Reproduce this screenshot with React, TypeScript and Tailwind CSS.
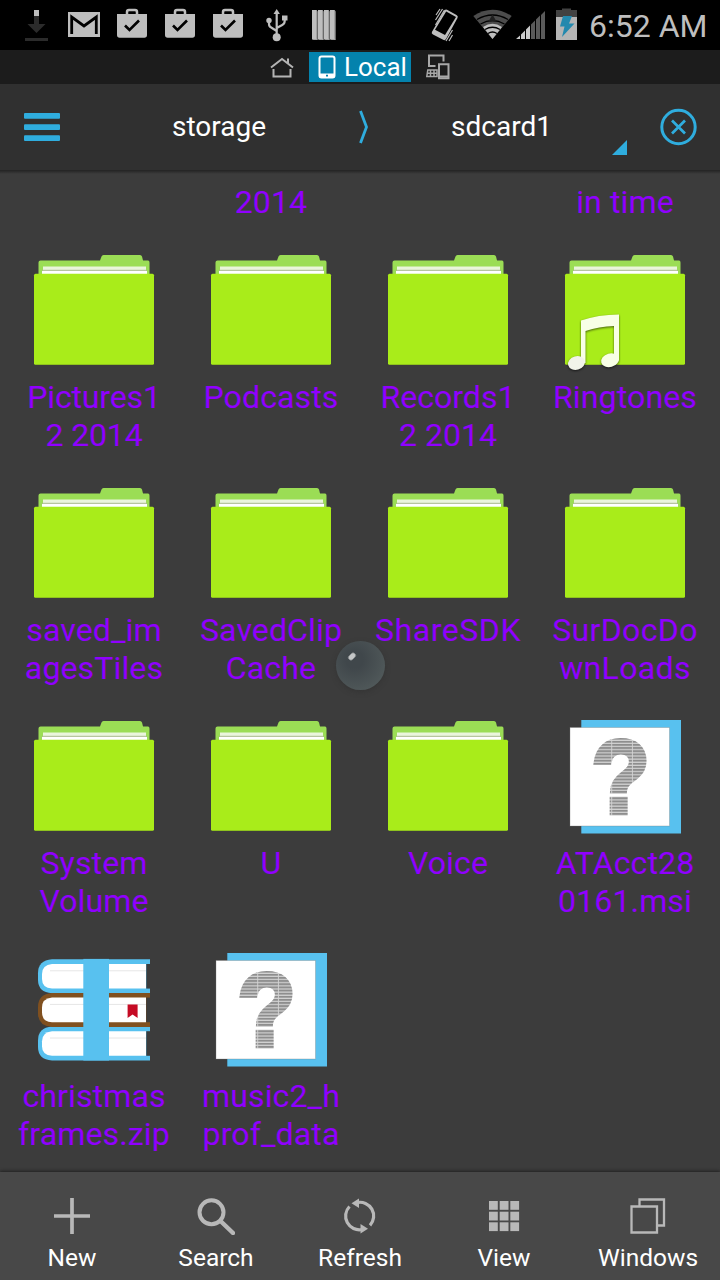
import type { ReactNode } from "react";

type Kind = "folder" | "music" | "unknown" | "zip";
type Item = { kind: Kind; lines: string[]; spacing?: string };

const items: Item[] = [
  { kind: "folder", lines: ["Pictures1", "2 2014"], spacing: "tracking-[-0.15px]" },
  { kind: "folder", lines: ["Podcasts"] },
  { kind: "folder", lines: ["Records1", "2 2014"], spacing: "tracking-[0px]" },
  { kind: "music", lines: ["Ringtones"] },
  { kind: "folder", lines: ["saved_im", "agesTiles"] },
  { kind: "folder", lines: ["SavedClip", "Cache"] },
  { kind: "folder", lines: ["ShareSDK"], spacing: "tracking-[0.55px]" },
  { kind: "folder", lines: ["SurDocDo", "wnLoads"], spacing: "tracking-[0.35px]" },
  { kind: "folder", lines: ["System", "Volume"] },
  { kind: "folder", lines: ["U"] },
  { kind: "folder", lines: ["Voice"] },
  { kind: "unknown", lines: ["ATAcct28", "0161.msi"] },
  { kind: "zip", lines: ["christmas", "frames.zip"] },
  { kind: "unknown", lines: ["music2_h", "prof_data"] },
];

function Folder({ music }: { music?: boolean }) {
  return (
    <>
      <path d="M9.500 28V16.500q0-2 2-2H71l1.500-4q.5-1.500 2-1.500H111q1.500 0 2 1.500l1 4h5q1.500 0 1.500 2V28z" fill="#9bdd55" />
      <path d="M14 20.500H117V28H14z" fill="#eaf5dc" />
      <path d="M13 25H118V28H13z" fill="#fff" />
      <path d="M13 24.300H118" stroke="#a9b98f" strokeWidth="1" />
      <rect x="5" y="27.700" width="120" height="91" rx="1.500" fill="#a9ec1a" />
      <path d="M6 118.500H124" stroke="#8fc41c" strokeWidth=".7" />
      {music && (
        <g style={{ filter: "drop-shadow(0 1px 1px rgba(0,0,0,.6))" }} fill="#f8ffe6">
          <path d="M21 74.500q17-6 38-6v46h-5V80q-15 .5-28.500 5V117H21z" />
          <ellipse cx="16.500" cy="117" rx="8.600" ry="6.800" transform="rotate(-15 16.500 117)" fill="#f1f3e9" />
          <ellipse cx="50" cy="114.300" rx="9" ry="6.800" transform="rotate(-15 50 114.300)" />
        </g>
      )}
    </>
  );
}

function Unknown() {
  return (
    <>
      <defs>
        <pattern id="scan" width="23" height="3.200" patternUnits="userSpaceOnUse">
          <rect width="23" height="3.200" fill="#d4d4d4" />
          <rect width="22" height="2" fill="#8e8e8e" />
        </pattern>
      </defs>
      <g transform="translate(5 0)">
        <rect x="16.300" y="8" width="99.700" height="113.500" fill="#58c1ef" />
        <rect x="5" y="15.500" width="99.500" height="98.500" fill="#fff" stroke="#77777766" strokeWidth=".8" />
        <text
          x="0"
          y="0"
          transform="translate(26.500 101) scale(.9 .98)"
          fontFamily="Liberation Sans, sans-serif"
          fontWeight="700"
          fontSize="106"
          fill="url(#scan)"
          stroke="url(#scan)"
          strokeWidth="5"
        >
          ?
        </text>
      </g>
    </>
  );
}

function Book({ y, color, mark }: { y: number; color: string; mark?: boolean }) {
  return (
    <g transform={`translate(0 ${y})`}>
      <path d="M121 0H23Q9 1 9 14v6.500Q9 33 23 34H121z" fill={color} />
      <path d="M117 4.700H23q-10 1-10 10v5q0 9 10 9.600h94z" fill="#fff" />
      <path d="M117.300 4.700H122V29.300h-4.700z" fill="#3c3c3c" />
      <path d="M21 11.500H117" stroke="#e6e6e6" strokeWidth="1" />
      {mark && <path d="M98.600 11.500h10v13.500l-5-3.500-5 3.500z" fill="#c50b24" />}
    </g>
  );
}

function Zip() {
  return (
    <>
      <Book y={14.300} color="#58c1ef" />
      <Book y={81.500} color="#58c1ef" />
      <Book y={47.900} color="#80501f" mark />
      <rect x="54.300" y="13.900" width="25.700" height="101.600" fill="#58c1ef" />
    </>
  );
}

function Line({ spacing = "tracking-[0.14px]", children }: { spacing?: string; children: ReactNode }) {
  return <span className={`block h-[38px] whitespace-nowrap text-[32px] leading-[38px] text-[#9000ff] ${spacing}`}>{children}</span>;
}

function Cell({ item }: { item: Item }) {
  return (
    <div className="flex h-[233px] flex-col items-center">
      <svg className="h-[132px] w-[130px] shrink-0" viewBox="0 0 130 132">
        {item.kind === "folder" && <Folder />}
        {item.kind === "music" && <Folder music />}
        {item.kind === "unknown" && <Unknown />}
        {item.kind === "zip" && <Zip />}
      </svg>
      <div className="text-center">
        {item.lines.map((l) => (
          <Line key={l} spacing={item.spacing}>
            {l}
          </Line>
        ))}
      </div>
    </div>
  );
}

function Bag() {
  return (
    <svg className="h-[50px] w-12" viewBox="0 0 48 50">
      <path d="M19 15v-3q0-2 2-2h6q2 0 2 2v3" fill="none" stroke="#bebebe" strokeWidth="2.500" />
      <path d="M9 14H39V35q0 2.700-2.700 2.700H11.700Q9 37.700 9 35z" fill="#bebebe" />
      <path d="M17 25.500l4.500 4.500L31 20.500" fill="none" stroke="#000" strokeWidth="2.600" />
    </svg>
  );
}

function StatusBar() {
  return (
    <div className="flex h-[50px] items-start bg-black pl-3">
      <svg className="h-[50px] w-12" viewBox="0 0 48 50">
        <path d="M22 16h5v8h6.500L24.500 33 15.500 24H22z" fill="#2b2b2b" />
        <path d="M22 10h5v6h-5z" fill="#bebebe" />
        <path d="M13 38H36v3H13z" fill="#2b2b2b" />
      </svg>
      <svg className="h-[50px] w-12" viewBox="0 0 48 50">
        <path d="M8 12H40V37H8z" fill="#bebebe" />
        <path d="M11.700 34V17L24 26l12.300-9V34" fill="none" stroke="#000" strokeWidth="2.800" />
      </svg>
      <Bag />
      <Bag />
      <Bag />
      <svg className="h-[50px] w-12" viewBox="0 0 48 50" fill="none" stroke="#bebebe" strokeWidth="2.200">
        <path d="M24.700 12v25M24.700 31l-5.500-3.500q-2.200-1-2.200-3.500v-4M24.700 28l5.500-3q2.500-1.200 2.500-4v-3" />
        <path d="M24.700 9l3.200 5h-6.400z" fill="#bebebe" stroke="none" />
        <circle cx="24.700" cy="37.300" r="4" fill="#bebebe" stroke="none" />
        <circle cx="17" cy="20.500" r="2.700" fill="#bebebe" stroke="none" />
        <path d="M30 15.500h5.500v5H30z" fill="#bebebe" stroke="none" />
      </svg>
      <svg className="h-[50px] w-12" viewBox="0 0 48 50">
        {[12, 18, 24, 30].map((x) => (
          <g key={x}>
            <path d={`M${x} 10h4.500l1.300 1.500v28.500h-4.300l-1.500-1.500z`} fill="#858585" />
            <path d={`M${x} 10h4.500v28.500l.8 1H${x}z`} fill="#bebebe" />
          </g>
        ))}
      </svg>
      <svg className="ml-[80px] h-[50px] w-8" viewBox="428 0 32 50">
        <path d="M444.500 10.500q1-1.500 2.500-.8l9.500 5.300q2 1.200 1 3L446 39q-1 1.800-2.800.8L433 34.500q-2-1-1-2.800z" fill="#bebebe" />
        <path d="M446.200 11.500l9.800 5.500-11 18-10-5.300z" fill="#000" />
        <path d="M435.500 20l7-11M436 15l4-6M435.500 25l9-15M446 41l6.500-11M449 41l3.500-6" stroke="#bebebe" strokeWidth="1.200" />
      </svg>
      <svg className="ml-3 h-[50px] w-10" viewBox="472 0 40 50">
        <path d="M473.300 16q19.200-12.500 38.400 0L492.500 39z" fill="#4c4c4c" />
        <path d="M483 27q9.500-6.500 19 0L492.500 39z" fill="#bebebe" />
        <g fill="none" stroke="#000" strokeWidth="1.300">
          <path d="M477 19.500q15.500-9 31 0M480.500 24q12-7 24 0M485 29.500q7.500-4.500 15 0M488 33.500q4.500-3 9 0" />
        </g>
        <path d="M492.500 14.500l4 7h-8z" fill="#202020" />
      </svg>
      <svg className="ml-1 h-[50px] w-[30px]" viewBox="516 0 30 50">
        <path d="M516 39l4-3.500V39zM521 34.500l4-4V39h-4zM526 29.500l4-4V39h-4z" fill="#cacaca" />
        <path d="M531 24.500l4-4V39h-4zM536 19.500l4-4V39h-4zM541 15l4-4V39h-4z" fill="#5a5a5a" />
      </svg>
      <svg className="ml-2.5 h-[50px] w-6" viewBox="556 0 24 50">
        <path d="M556 17v-7h6V8.500h9V10h6v7z" fill="#424242" />
        <path d="M556 17h21v23h-21z" fill="#b5b5b5" />
        <path d="M563 16h9l-3 7.500h5.500L562 37l2.500-10.500H560z" fill="#2389ae" />
      </svg>
      <span className="ml-[9px] whitespace-nowrap text-[32px] leading-[52px] text-[#bebebe]">6:52 AM</span>
    </div>
  );
}

function Tabs() {
  return (
    <div className="flex h-[34px] items-start bg-[#1c1c1c] pl-[270px]">
      <svg className="h-[34px] w-6" viewBox="0 0 24 34" fill="none" stroke="#b4b4b4" strokeWidth="2">
        <path d="M1 17.500L12 9l11 8.500" />
        <path d="M18 13V8.500" />
        <path d="M3.500 19v7.500h17V19" />
      </svg>
      <div className="ml-[15px] mt-0.5 flex h-[30px] w-[101.5px] items-center bg-[#0482ad]">
        <svg className="ml-[9px] h-[24px] w-[18px]" viewBox="0 0 18 24">
          <rect x="1.500" y="1.500" width="15" height="21" rx="2" fill="none" stroke="#fff" strokeWidth="2" />
          <path d="M1.500 18.500h15v4h-15z" fill="#fff" />
          <path d="M8 19.700h2v1.700H8z" fill="#0482ad" />
        </svg>
        <span className="ml-[8px] text-[26px] leading-[30px] text-white">Local</span>
      </div>
      <svg className="ml-[15px] h-[34px] w-6" viewBox="0 0 24 34" fill="none" stroke="#a8a8a8" strokeWidth="2">
        <path d="M9.500 16H3V5.500H17.500V11.500" />
        <path d="M13 14.200h9.500v14H13z" />
        <path d="M13 26.500H22" />
        <path d="M11 20H1.800L.8 26.500H11zM1 23.300h10M4.500 20v6.500M8 20v6.500" strokeWidth="1.500" />
      </svg>
    </div>
  );
}

function Header() {
  return (
    <div className="flex h-[86px] items-center bg-[#303030] text-[28px] leading-[34px] text-white">
      <svg className="ml-6 h-[28px] w-9" viewBox="0 0 36 28" fill="#2fadde">
        <rect y="0" width="36" height="5.700" rx="1" />
        <rect y="11.200" width="36" height="5.700" rx="1" />
        <rect y="22.300" width="36" height="5.700" rx="1" />
      </svg>
      <span className="w-[318px] text-center">storage</span>
      <svg className="-ml-5 h-[34px] w-3" viewBox="0 0 12 34" fill="none" stroke="#2fadde" strokeWidth="2.800">
        <path d="M2.500 1L8.500 17 2.500 33" />
      </svg>
      <span className="ml-[7px] w-[250px] pr-px text-center">sdcard1</span>
      <svg className="-ml-[15px] mt-[41px] h-[15px] w-[15px]" viewBox="0 0 15 15">
        <path d="M0 15L15 0V15z" fill="#2fadde" />
      </svg>
      <svg className="ml-[33px] h-[38px] w-[38px]" viewBox="0 0 38 38" fill="none" stroke="#2fadde">
        <circle cx="18.500" cy="19" r="16.700" strokeWidth="3" />
        <path d="M12 12.500l13 13M25 12.500L12 25.500" strokeWidth="2.700" />
      </svg>
    </div>
  );
}

function Action({ label, children }: { label: string; children: ReactNode }) {
  return (
    <div className="flex w-36 flex-col items-center">
      <svg className="mt-[25px] h-[38px] w-[38px]" viewBox="0 0 38 38" fill="none" stroke="#b8b8b8">
        {children}
      </svg>
      <span className="mt-[8px] text-[24.5px] leading-[30px] text-white">{label}</span>
    </div>
  );
}

export default function App() {
  return (
    <div className="relative flex h-[1280px] w-[720px] flex-col overflow-hidden bg-[#3c3c3c] font-['Roboto',sans-serif]">
      <StatusBar />
      <Tabs />
      <Header />
      <div className="h-[1002px] overflow-hidden">
        <div className="h-1 bg-linear-to-b from-[#232323] to-[#3c3c3c]" />
        <div className="ml-[5.5px] grid h-[72px] w-[708px] grid-cols-4 pt-[9px] text-center">
          <span />
          <Line>2014</Line>
          <span />
          <Line>in time</Line>
        </div>
        <div className="ml-[5.5px] grid w-[708px] grid-cols-4">
          {items.map((item) => (
            <Cell key={item.lines.join("")} item={item} />
          ))}
        </div>
      </div>
      <div className="flex h-[108px] bg-[#484848] shadow-[0_-1px_3px_#202020]">
        <Action label="New">
          <path d="M19 1v36M1 19h36" strokeWidth="3.700" />
        </Action>
        <Action label="Search">
          <circle cx="14.500" cy="15.300" r="12" strokeWidth="4" />
          <path d="M23.500 24L36 36" strokeWidth="4.500" strokeLinecap="round" />
        </Action>
        <Action label="Refresh">
          <path d="M8.500 9.500A13.700 13.700 0 0 0 21 32.500M16 5.600A13.700 13.700 0 0 1 29 28.300" strokeWidth="3.200" />
          <path d="M10.500 6.300l7.500-4.800v9.600z" fill="#b8b8b8" stroke="none" />
          <path d="M27 31.700l-7.500 4.800v-9.600z" fill="#b8b8b8" stroke="none" />
        </Action>
        <Action label="View">
          {[4, 14.7, 25.3].map((y) =>
            [4, 14.7, 25.3].map((x) => <rect key={`${x}-${y}`} x={x} y={y} width="8.800" height="8.800" fill="#b8b8b8" stroke="none" />)
          )}
        </Action>
        <Action label="Windows">
          <path d="M10.500 9V2.500H35V28.500H28" strokeWidth="2.300" />
          <path d="M2.500 9.500H28V35.500H2.500z" strokeWidth="2.300" />
        </Action>
      </div>
      <div className="absolute left-[336px] top-[641px] h-[49px] w-[49px] rounded-full bg-[radial-gradient(circle_at_38%_38%,#40474b_20%,#4b5355_60%,#566060_100%)] shadow-[0_2px_5px_#30303099]">
        <div className="absolute left-[12px] top-[13px] h-[5px] w-[8px] -rotate-45 rounded-full bg-[#c4c6c7] blur-[0.5px]" />
      </div>
    </div>
  );
}
